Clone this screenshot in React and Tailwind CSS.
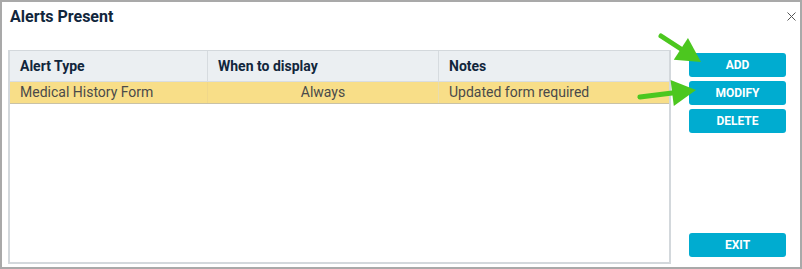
import React from "react";

function Arrow({ x1, y1, x2, y2 }) {
  const dx = x2 - x1, dy = y2 - y1;
  const len = Math.hypot(dx, dy);
  const ux = dx / len, uy = dy / len;
  const px = -uy, py = ux;
  const hl = 24, hw = 13;
  const bx = x2 - ux * hl, by = y2 - uy * hl;
  const pts = `${x2},${y2} ${bx + px * hw},${by + py * hw} ${bx - px * hw},${by - py * hw}`;
  return (
    <g>
      <line x1={x1} y1={y1} x2={bx + ux * 2} y2={by + uy * 2} stroke="#4cc71f" strokeWidth="5" strokeLinecap="round" />
      <polygon points={pts} fill="#4cc71f" />
    </g>
  );
}

export default function App() {
  return (
    <div className="relative w-[802px] h-[269px] bg-white" style={{ fontFamily: "Roboto, 'Liberation Sans', sans-serif" }}>
      <div className="w-full h-full border-[2px] border-[#a9a9a9] flex flex-col pl-[6px] pr-[14px] pb-[3px]">
        <div className="flex items-start justify-between h-[46px]">
          <div className="text-[16px] font-bold text-[#11263c] pt-[4px] pl-[2px] leading-[22px]">Alerts Present</div>
          <svg className="mt-[10px] mr-[-10px]" width="9" height="9" viewBox="0 0 9 9">
            <path d="M0.5 0.5 L8.5 8.5 M8.5 0.5 L0.5 8.5" stroke="#555" strokeWidth="1" />
          </svg>
        </div>
        <div className="flex flex-1 mt-[2px]">
          <div className="w-[663px] border-[#d3d8dc] border-[2px] border-t-[1px] flex flex-col">
            <div className="flex h-[31px] bg-[#ebeff2] text-[14px] font-bold text-[#11263c] border-b border-[#d9dde0]">
              <div className="w-[198px] border-r border-[#d6dbdf] flex items-center pl-[10px] pt-[1px]">Alert Type</div>
              <div className="w-[231px] border-r border-[#d6dbdf] flex items-center pl-[10px] pt-[1px]">When to display</div>
              <div className="flex-1 flex items-center pl-[10px] pt-[1px]">Notes</div>
            </div>
            <div className="flex h-[22px] bg-[#f8de88] text-[14px] text-[#4a4a4a] border-b border-[#c9c2a6]">
              <div className="w-[198px] border-r border-[#f0d78a] flex items-center pl-[10px]">Medical History Form</div>
              <div className="w-[231px] border-r border-[#e8dcb0] flex items-center justify-center">Always</div>
              <div className="flex-1 flex items-center pl-[10px]">Updated form required</div>
            </div>
            <div className="flex-1 bg-white"></div>
          </div>
          <div className="flex flex-col ml-[18px] w-[97px] pt-[3px] pb-[7px]">
            <button className="h-[24px] rounded-[3px] bg-[#00acd0] text-white text-[12px] font-bold">ADD</button>
            <button className="h-[24px] mt-[4px] rounded-[3px] bg-[#00acd0] text-white text-[12px] font-bold">MODIFY</button>
            <button className="h-[24px] mt-[4px] rounded-[3px] bg-[#00acd0] text-white text-[12px] font-bold">DELETE</button>
            <div className="flex-1"></div>
            <button className="h-[24px] rounded-[3px] bg-[#00acd0] text-white text-[12px] font-bold">EXIT</button>
          </div>
        </div>
      </div>
      <svg className="absolute left-0 top-0 pointer-events-none" width="802" height="269">
        <Arrow x1={661} y1={36} x2={701} y2={62} />
        <Arrow x1={640} y1={97} x2={696} y2={90} />
      </svg>
    </div>
  );
}
